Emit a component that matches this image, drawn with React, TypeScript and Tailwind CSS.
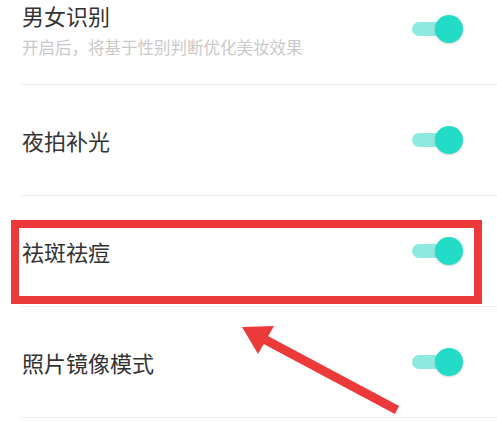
import React from 'react';

type Row = { title: string; desc?: string };

const rows: Row[] = [
  { title: '男女识别', desc: '开启后，将基于性别判断优化美妆效果' },
  { title: '夜拍补光' },
  { title: '祛斑祛痘' },
  { title: '照片镜像模式' },
];

function Toggle() {
  return (
    <div className="relative h-[28px] w-[51px] shrink-0">
      <div className="absolute left-0 top-[7px] h-[14px] w-[42px] rounded-full bg-[#8eeae0]" />
      <div className="absolute right-0 top-0 h-[28px] w-[28px] rounded-full bg-[#22dcc8] shadow-[0_1px_2px_rgba(0,0,0,0.18)]" />
    </div>
  );
}

export default function App() {
  return (
    <div
      className="relative h-[421px] w-[497px] overflow-hidden bg-white"
      style={{ fontFamily: '"Noto Sans CJK SC", "Noto Sans", sans-serif' }}
    >
      <div className="-mt-[26px] ml-[21px]">
        {rows.map((row) => (
          <div
            key={row.title}
            className="flex h-[111px] items-center justify-between border-b border-[#ededed] pl-px pr-[34px]"
          >
            <div className="flex flex-col">
              <span className="text-[22px] leading-[30px] text-[#333333]">{row.title}</span>
              {row.desc && (
                <span className="mt-[6px] text-[16.5px] leading-[22px] text-[#c9c9c9]">{row.desc}</span>
              )}
            </div>
            <Toggle />
          </div>
        ))}
      </div>

      {/* annotation box */}
      <div className="absolute left-[11px] top-[220px] h-[84px] w-[471px] border-[8px] border-[#ec3a3b]" />

      {/* annotation arrow */}
      <svg className="absolute left-0 top-0" width="497" height="421" viewBox="0 0 497 421">
        <line x1="397" y1="410" x2="262" y2="338" stroke="#ec3a3b" strokeWidth="9" />
        <polygon points="242,327 274,326 258,354" fill="#ec3a3b" />
      </svg>
    </div>
  );
}
